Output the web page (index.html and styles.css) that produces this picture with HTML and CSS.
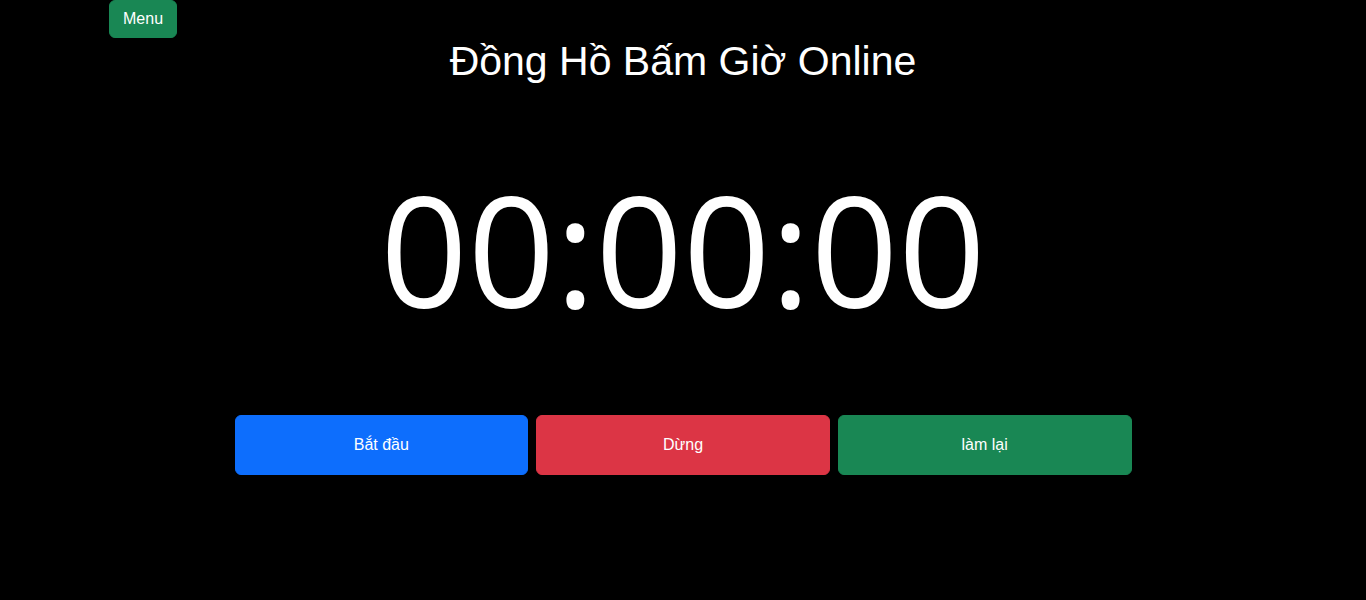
FILE: index.html
```html
<!DOCTYPE html>
<html>
<head>
<meta charset="utf-8">
<title>Đồng Hồ Bấm Giờ Online</title>
<link rel="stylesheet" href="styles.css">
</head>
<body>
<header class="topbar">
  <button class="btn btn-menu">Menu</button>
</header>
<main class="main">
  <h1 class="title">Đồng Hồ Bấm Giờ Online</h1>
  <div class="clock-display">00:00:00</div>
  <div class="controls">
    <button class="btn btn-control btn-start">Bắt đầu</button>
    <button class="btn btn-control btn-stop">Dừng</button>
    <button class="btn btn-control btn-reset">làm lại</button>
  </div>
</main>
</body>
</html>
```
FILE: styles.css
```css
body {
  margin: 0;
  padding: 0;
  background: #000;
  color: #fff;
}
.topbar {
  padding-left: 109px;
  height: 38px;
}
.btn {
  box-sizing: border-box;
  font-family: "Liberation Sans", Arial, sans-serif;
  font-size: 16px;
  line-height: 24px;
  color: #fff;
  border: 1px solid transparent;
  border-radius: 6px;
  cursor: pointer;
}
.btn-menu {
  background: #198754;
  border-color: #198754;
  padding: 6px 13px;
  height: 38px;
}
.main {
  display: flex;
  flex-direction: column;
  align-items: center;
}
.title {
  margin: -1px 0 0 0;
  font-family: "Liberation Sans", Arial, sans-serif;
  font-size: 41px;
  font-weight: 400;
  line-height: 48px;
}
.clock-display {
  margin-top: 87px;
  font-family: "Open Sans";
  font-size: 153px;
  line-height: 153px;
}
.controls {
  margin-top: 90px;
  display: flex;
  gap: 8px;
  width: 897px;
}
.btn-control {
  flex: 1;
  height: 60px;
}
.btn-start { background: #0d6efd; border-color: #0d6efd; }
.btn-stop { background: #dc3545; border-color: #dc3545; }
.btn-reset { background: #198754; border-color: #198754; }
```
